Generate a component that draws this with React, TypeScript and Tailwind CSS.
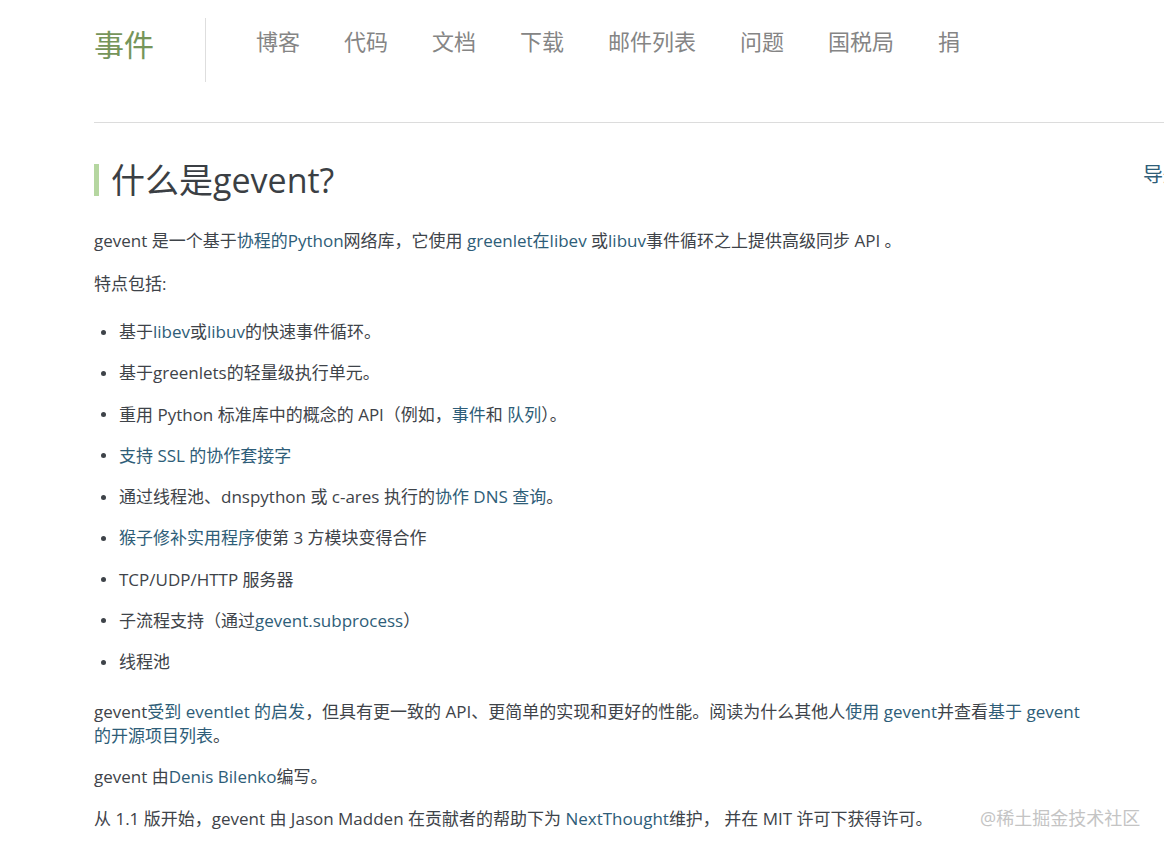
import * as React from "react";

const FONT = { fontFamily: '"Open Sans", "Noto Sans CJK SC", sans-serif' };

const NAV = ["博客", "代码", "文档", "下载", "邮件列表", "问题", "国税局", "捐"];

function A({ children }: { children: React.ReactNode }) {
  return <span className="text-[#2e5d78]">{children}</span>;
}

function Li({ children }: { children: React.ReactNode }) {
  return (
    <li className="flex items-center pl-[7px] leading-[24px]">
      <span className="mr-[13px] h-[5px] w-[5px] shrink-0 rounded-full bg-[#3e4349]" />
      <span>{children}</span>
    </li>
  );
}

export default function App() {
  return (
    <div className="relative h-[851px] w-full overflow-hidden bg-white text-[#3e4349]" style={FONT}>
      <div className="pl-[94px]">
        {/* top bar */}
        <header className="flex h-[123px] border-b border-[#dcdcdc]">
          <div className="pt-[26px] text-[30px] leading-[38px] text-[#76955a]">事件</div>
          <div className="ml-[51px] mt-[18px] h-[64px] w-px bg-[#dedede]" />
          <nav className="ml-[50px] flex gap-[44px] pt-[27px] text-[22px] leading-[28px] text-[#858585]">
            {NAV.map((n) => (
              <span key={n}>{n}</span>
            ))}
          </nav>
        </header>

        <div className="flex">
          <main className="w-[990px] shrink-0 text-[17px] leading-[24px]">
            <h1 className="mt-[37px] flex items-center">
              <span className="h-[32px] w-[5px] bg-[#b5d6a0]" />
              <span className="pl-[12px] text-[34px] font-normal leading-[40px] text-[#3b3f44]">什么是gevent?</span>
            </h1>

            <p className="mt-[29px]">
              gevent 是一个基于<A>协程的Python</A>网络库，它使用 <A>greenlet在libev</A> 或<A>libuv</A>事件循环之上提供高级同步 API 。
            </p>
            <p className="mt-[19px]">特点包括:</p>

            <ul className="mt-[24px] flex flex-col gap-[17.25px]">
              <Li>
                基于<A>libev</A>或<A>libuv</A>的快速事件循环。
              </Li>
              <Li>基于greenlets的轻量级执行单元。</Li>
              <Li>
                重用 Python 标准库中的概念的 API（例如，<A>事件</A>和 <A>队列</A>）。
              </Li>
              <Li>
                <A>支持 SSL 的协作套接字</A>
              </Li>
              <Li>
                通过线程池、dnspython 或 c-ares 执行的<A>协作 DNS 查询</A>。
              </Li>
              <Li>
                <A>猴子修补实用程序</A>使第 3 方模块变得合作
              </Li>
              <Li>TCP/UDP/HTTP 服务器</Li>
              <Li>
                子流程支持（通过<A>gevent.subprocess</A>）
              </Li>
              <Li>线程池</Li>
            </ul>

            <p className="mt-[26px]">
              gevent<A>受到 eventlet 的启发</A>，但具有更一致的 API、更简单的实现和更好的性能。阅读为什么其他人<A>使用 gevent</A>并查看<A>基于 gevent</A>
              <br />
              <A>的开源项目列表</A>。
            </p>
            <p className="mt-[17px]">
              gevent 由<A>Denis Bilenko</A>编写。
            </p>
            <p className="mt-[18px]">
              从 1.1 版开始，gevent 由 Jason Madden 在贡献者的帮助下为 <A>NextThought</A>维护， 并在 MIT 许可下获得许可。
            </p>
          </main>

          <aside className="ml-[59px] shrink-0 pt-[40px] text-[20px] leading-[24px] text-[#2e5d78]">导航</aside>
        </div>
      </div>

      <div className="absolute left-[980px] top-[806px] text-[18px] leading-[24px] text-[#c4c4c4]">@稀土掘金技术社区</div>
    </div>
  );
}
